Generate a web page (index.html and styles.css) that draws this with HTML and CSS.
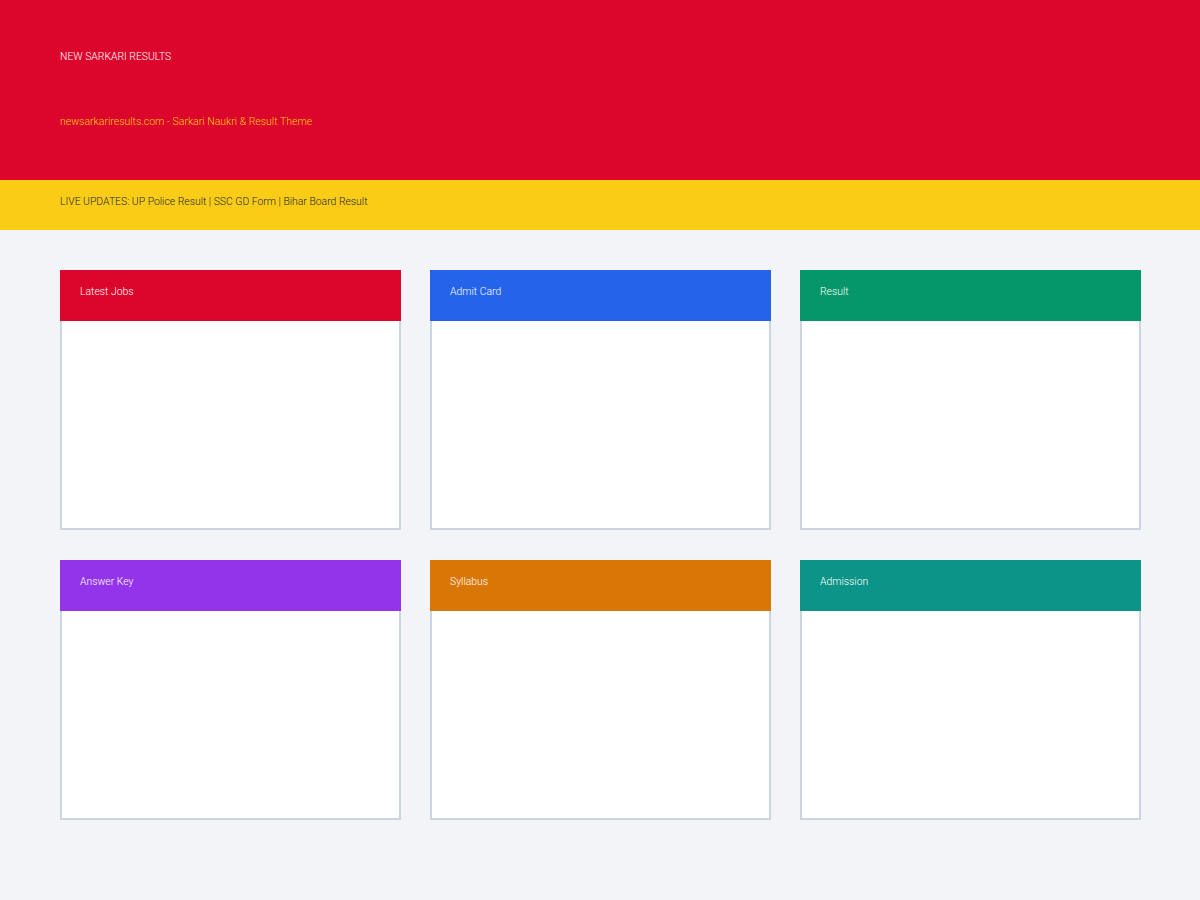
FILE: index.html
```html
<!DOCTYPE html>
<html lang="en">
<head>
<meta charset="utf-8">
<title>New Sarkari Results</title>
<link rel="stylesheet" href="styles.css">
</head>
<body>
<header class="site-header">
  <div class="site-title">NEW SARKARI RESULTS</div>
  <div class="site-tagline">newsarkariresults.com - Sarkari Naukri &amp; Result Theme</div>
</header>
<div class="ticker">LIVE UPDATES: UP Police Result | SSC GD Form | Bihar Board Result</div>
<main class="boxes">
  <section class="box">
    <div class="box-head red">Latest Jobs</div>
    <div class="box-body"></div>
  </section>
  <section class="box">
    <div class="box-head blue">Admit Card</div>
    <div class="box-body"></div>
  </section>
  <section class="box">
    <div class="box-head green">Result</div>
    <div class="box-body"></div>
  </section>
  <section class="box">
    <div class="box-head purple">Answer Key</div>
    <div class="box-body"></div>
  </section>
  <section class="box">
    <div class="box-head orange">Syllabus</div>
    <div class="box-body"></div>
  </section>
  <section class="box">
    <div class="box-head teal">Admission</div>
    <div class="box-body"></div>
  </section>
</main>
</body>
</html>
```
FILE: styles.css
```css
* { box-sizing: border-box; }

body {
  margin: 0;
  background: #f3f4f8;
  font-family: Roboto, "Liberation Sans", sans-serif;
  font-size: 10.4px;
  font-weight: 300;
  line-height: 16px;
}

.site-header {
  background: #dc052b;
  height: 180px;
  padding: 49px 60px 0;
}

.site-title {
  color: #ffffff;
}

.site-tagline {
  color: #facc15;
  margin-top: 49px;
  font-size: 10.5px;
}

.ticker {
  background: #facc15;
  color: #1f2937;
  height: 50px;
  padding: 14px 60px 0;
}

.boxes {
  display: grid;
  grid-template-columns: repeat(3, 341px);
  column-gap: 29px;
  row-gap: 30px;
  padding: 40px 60px;
}

.box {
  display: flex;
  flex-direction: column;
}

.box-head {
  height: 51px;
  padding: 14px 20px 0;
  color: #ffffff;
}

.box-body {
  height: 209px;
  background: #ffffff;
  border: 2px solid #cbd5e1;
  border-top: none;
}

.red { background: #dc052b; }
.blue { background: #2563eb; }
.green { background: #059669; }
.purple { background: #9333ea; }
.orange { background: #d97706; }
.teal { background: #0d9488; }
```
